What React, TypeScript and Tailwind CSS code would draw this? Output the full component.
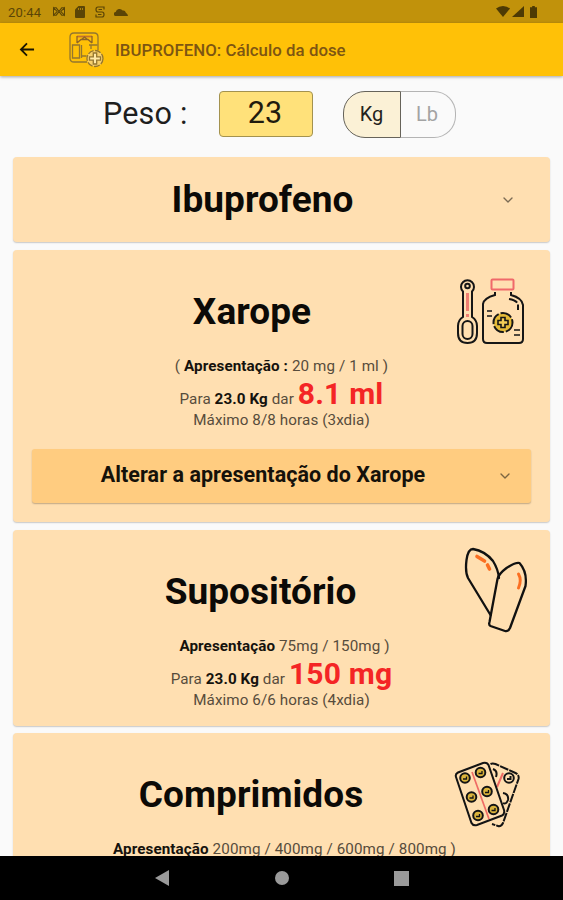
import React from 'react';
import { ChevronDown } from 'lucide-react';

const StatusBar = () => (
  <div className="flex h-[23px] shrink-0 items-center bg-[#c1920b] pl-2 pr-[25px] text-[#5b4506]">
    <span className="w-[36px] pt-px text-[13px] leading-none tracking-[0.200px]">20:44</span>
    <svg className="ml-[8px] h-[11px] w-[14px]" viewBox="0 0 14 12" fill="none" stroke="currentColor" strokeWidth="1.100">
      <path d="M1 2v8l4-4zM13 2v8L9 6zM1 2l3 0 6 8h3M13 2h-3L4 10H1" />
    </svg>
    <svg className="ml-[9px] h-[12px] w-[10px]" viewBox="0 0 10 12" fill="currentColor">
      <path d="M3.500 0H9q1 0 1 1v10q0 1-1 1H1q-1 0-1-1V3.500z" />
      <path d="M3.500 2v2M5.500 2v2M7.500 2v2" stroke="#c1920b" strokeWidth="0.800" />
    </svg>
    <svg className="ml-[10px] h-[12px] w-[10px]" viewBox="0 0 10 12" fill="none" stroke="currentColor" strokeWidth="1.200">
      <path d="M9 3.500V1H3Q1 1 1 3.500T3 6h4Q9 6 9 8.500T7 11H1V8.500M3.500 3.500H7M3 8.500h3.500" />
    </svg>
    <svg className="ml-[9px] h-[8px] w-[14px]" viewBox="0 0 14 8" fill="currentColor">
      <path d="M2 8a2 2 0 0 1-.3-4 4 4 0 0 1 7-1.500 2.500 2.500 0 0 1 3 2Q14 6 14 8z" />
    </svg>
    <div className="ml-auto flex items-center">
      <svg className="h-[11px] w-[14px]" viewBox="0 0 14 11" fill="#4d3a04">
        <path d="M7 11L0 2.500Q3 0 7 0t7 2.500z" />
      </svg>
      <svg className="ml-[2px] h-[11px] w-[12px]" viewBox="0 0 12 11" fill="#4d3a04">
        <path d="M12 0v11H0z" />
      </svg>
      <svg className="ml-[6px] mr-px h-[12px] w-[7px]" viewBox="0 0 8 12" preserveAspectRatio="none" fill="#4d3a04">
        <path d="M2.500 0h3v1.200H8V12H0V1.200h2.500z" />
      </svg>
    </div>
  </div>
);

const LogoIcon = () => (
  <svg className="h-[36px] w-[36px] shrink-0" viewBox="0 0 36 36" fill="none" stroke="#94762f" strokeWidth="1.300">
    <path d="M18 30H5q-4 0-4-4V5q0-4 4-4h20q4 0 4 4v13" />
    <path d="M3.500 13h7v13h-7zM12.500 26V13M12.500 24h5M20 13h8.500M22 13v4" />
    <path d="M8 4.500h15" stroke="#c4702c" strokeWidth="1.800" />
    <path d="M8 11V4M23 4v7M8 11l4-3.500h7l4 3.500M12.500 7.500L15.500 5l3 2.500" stroke="#8f6427" />
    <circle cx="26" cy="26.500" r="8" fill="#f6cf6b" strokeDasharray="6 1.500" />
    <path d="M24.300 21h3.400v3.800h3.800v3.400h-3.800V32h-3.400v-3.800h-3.800v-3.400h3.800z" fill="#ffe9a8" />
  </svg>
);

const AppBar = () => (
  <header className="relative z-10 flex h-[53px] shrink-0 items-center bg-[#ffc107] pl-[19px] shadow-[0_1px_3px_rgba(0,0,0,0.35)]">
    <svg className="-mt-px h-[15px] w-[16px]" viewBox="0 0 16 16" fill="none" stroke="#1c1600" strokeWidth="1.900">
      <path d="M15.500 8H2M8 1.500L1.500 8 8 14.500" />
    </svg>
    <div className="ml-[34px]">
      <LogoIcon />
    </div>
    <h1 className="ml-[10px] pt-px text-[16.800px] font-medium leading-none tracking-[0.040px] text-[#7d5512]">
      IBUPROFENO: Cálculo da dose
    </h1>
  </header>
);

const WeightRow = () => (
  <div className="flex h-[81px] shrink-0 items-center pl-[103px] pb-[5px]">
    <span className="w-[116px] text-[30.500px] leading-none tracking-[0.200px] text-[#1e1e1e]">Peso :</span>
    <div className="flex h-[46px] w-[94px] items-center justify-center rounded-[4px] border border-[#a3924f] bg-[#ffe17a] pb-px pr-[2px] text-[30.500px] leading-none text-[#1f1b0e]">
      23
    </div>
    <div className="ml-[30px] flex h-[47px] w-[113px] text-[20px] leading-none">
      <button className="w-[58px] rounded-l-[22px] border border-[#66635a] bg-[#fbf1d6] pr-px text-[#24221c]">Kg</button>
      <button className="w-[55px] rounded-r-[22px] border border-l-0 border-[#b4b4b4] pr-[2px] text-[#a3a3a3]">Lb</button>
    </div>
  </div>
);

const SyrupIcon = () => (
  <svg className="h-[68px] w-[68px]" viewBox="0 0 68 68" fill="none" stroke="#161616" strokeWidth="2">
    <path d="M7 13.500a6.500 6.500 0 1 1 9 0V39q5 3 5 9v7q0 10-9.500 10T2 55v-7q0-6 5-9z" />
    <circle cx="11.500" cy="8" r="2.300" />
    <rect x="6.500" y="43" width="10" height="18" rx="5" />
    <path d="M11.500 15v18M11.500 36v3" stroke="#ef7f72" strokeWidth="3" />
    <rect x="35.500" y="1.500" width="22" height="10" rx="1" stroke="#f0696a" />
    <path d="M39 14v3q-11 3-12 9v35q0 4 4 4h32q4 0 4-4V27q-1-7-12-10v-3" />
    <path d="M53 21q7 1 9 5v6" strokeDasharray="9 2" />
    <path d="M31 33h5M31 38h5M58 52h6M58 57h6" strokeWidth="1.600" />
    <circle cx="47" cy="44.500" r="9.500" fill="#e5bb38" strokeDasharray="12 2" />
    <path d="M45 39.500h4v3h3v4h-3v3h-4v-3h-3v-4h3z" fill="#f3ce58" strokeWidth="1.600" />
  </svg>
);

const SuppositoryIcon = () => (
  <svg className="h-[88px] w-[64px]" viewBox="0 0 64 88" fill="none" stroke="#111" strokeWidth="2.300" strokeLinejoin="round" strokeLinecap="round">
    <path d="M26.500 68L4 31Q1 25 2.500 13 4 2 9 2q12 2 20 12 5 8 6 17" />
    <path d="M26.500 79q-2-1-1-4L33.500 32q1-5 9-11 9-6 13-5 8 9 6 23L46 81q-2 4-5 3z" />
    <path d="M13 9.500l7.500 4.500M23.500 18l2 4" stroke="#fb6f22" strokeWidth="3.600" />
    <path d="M54.500 27q3.500 6 0 14" stroke="#fb6f22" strokeWidth="3" />
  </svg>
);

const pills = [
  [11, 17], [26.500, 11.500], [17.500, 36], [33, 30.500], [24, 54.500], [39.500, 48.500],
];

const TabletsIcon = () => (
  <svg className="h-[68px] w-[68px]" viewBox="0 0 68 68" fill="none" stroke="#141414" strokeWidth="2">
    <path d="M36.500 3q2-1 5 0l20 9q4 2 3 6L49 62q-2 4-5 3l-6-2" strokeDasharray="9 1" />
    <circle cx="55" cy="17" r="4.800" />
    <path d="M53 18h3.500v-3M39 8q5 2 3 8M49 32q6 1 5 7-2 5-5 3" />
    <path d="M49 12l-6 14" stroke="#ef6b64" />
    <path d="M2 16q-1-3 2-4.500L29 2q4-1 5.500 2L50 49q1 4-2 5.500L23 64q-4 1-5.500-2z" fill="#ffdfb1" />
    <path d="M18 11l17 47" stroke="#ef6b64" strokeWidth="1.700" />
    {pills.map(([cx, cy]) => (
      <g key={`${cx}-${cy}`}>
        <circle cx={cx} cy={cy} r="4.800" fill="#dcb43c" />
        <path d={`M${cx - 2} ${cy + 1}h3.500v-2.500`} strokeWidth="1.300" />
      </g>
    ))}
  </svg>
);

const cardClass = 'mx-[13px] shrink-0 rounded-[4px] bg-[#ffdfb1] shadow-[0_1px_1.500px_rgba(0,0,0,0.2)]';
const titleClass = 'flex-1 text-center text-[37px] font-bold leading-none tracking-[0.050px] text-[#0c0a07]';

type DoseProps = {
  prefix?: string;
  label: string;
  presentation: string;
  dose?: string;
  max?: string;
};

const Dose = ({ prefix, label, presentation, dose, max }: DoseProps) => (
  <div className="text-center text-[15.200px] tracking-[0.100px] text-[#574c3c]">
    <p className={`h-[17px] whitespace-pre leading-[17px] ${prefix ? '' : 'pl-[6px]'}`}>
      {prefix}
      <b className="font-bold text-[#15120d]">{label}</b> {presentation}
    </p>
    {dose && (
      <p className="h-[37px] whitespace-pre leading-[37px]">
        Para <b className="font-bold text-[#15120d]">23.0 Kg</b> dar{' '}
        <b className="text-[30px] font-bold tracking-[0.200px] text-[#f42525]">{dose}</b>
      </p>
    )}
    {max && <p className="h-[17px] leading-[17px]">{max}</p>}
  </div>
);

const App = () => {
  return (
    <div className="flex h-[900px] w-[563px] flex-col overflow-hidden bg-[#fafafa] font-['Roboto',sans-serif]">
      <StatusBar />
      <AppBar />

      <main className="flex min-h-0 flex-1 flex-col overflow-hidden">
        <WeightRow />

        <section className={`${cardClass} flex h-[85px] items-center pr-[34px]`}>
          <h2 className={`${titleClass} pl-[12px]`}>Ibuprofeno</h2>
          <ChevronDown className="h-4 w-4 text-[#7b6b54]" />
        </section>

        {/* Syrup */}
        <section className={`${cardClass} mt-2 h-[272px] px-[19px]`}>
          <div className="flex h-[108px] items-center">
            <h2 className={`${titleClass} pl-[16px] pt-[15px]`}>Xarope</h2>
            <div className="mr-[7px] mt-[15px]">
              <SyrupIcon />
            </div>
          </div>
          <Dose prefix="( " label="Apresentação :" presentation="20 mg / 1 ml )" dose="8.1 ml" max="Máximo 8/8 horas (3xdia)" />
          <button className="mt-5 flex h-[54px] w-full items-center rounded-[3px] bg-[#ffcc80] pr-[18px] shadow-[0_1px_1.500px_rgba(0,0,0,0.25)]">
            <span className="flex-1 pb-[2px] pr-[3px] text-center text-[21.500px] font-bold leading-none tracking-[0.050px] text-[#15110a]">
              Alterar a apresentação do Xarope
            </span>
            <ChevronDown className="h-4 w-4 text-[#7b6540]" />
          </button>
        </section>

        {/* Suppository */}
        <section className={`${cardClass} mt-2 h-[196px] px-[19px]`}>
          <div className="flex h-[108px] items-center">
            <h2 className={`${titleClass} pl-[25px] pt-[15px]`}>Supositório</h2>
            <div className="mr-[3px] mt-[13px]">
              <SuppositoryIcon />
            </div>
          </div>
          <Dose label="Apresentação" presentation="75mg / 150mg )" dose="150 mg" max="Máximo 6/6 horas (4xdia)" />
        </section>

        {/* Tablets */}
        <section className={`${cardClass} mt-[7px] h-[196px] px-[19px]`}>
          <div className="flex h-[108px] items-center">
            <h2 className={`${titleClass} pl-[16px] pt-[15px]`}>Comprimidos</h2>
            <div className="mr-[9px] mt-[15px]">
              <TabletsIcon />
            </div>
          </div>
          <Dose label="Apresentação" presentation="200mg / 400mg / 600mg / 800mg )" />
        </section>
      </main>

      <nav className="flex h-[44px] shrink-0 items-center justify-center gap-[105px] bg-black">
        <svg className="h-[16px] w-[15px]" viewBox="0 0 15 16" fill="#9a9a9a">
          <path d="M14 0v16L0 8z" />
        </svg>
        <span className="h-[14px] w-[14px] rounded-full bg-[#9a9a9a]" />
        <span className="h-[15px] w-[15px] bg-[#9a9a9a]" />
      </nav>
    </div>
  );
};

export default App;
